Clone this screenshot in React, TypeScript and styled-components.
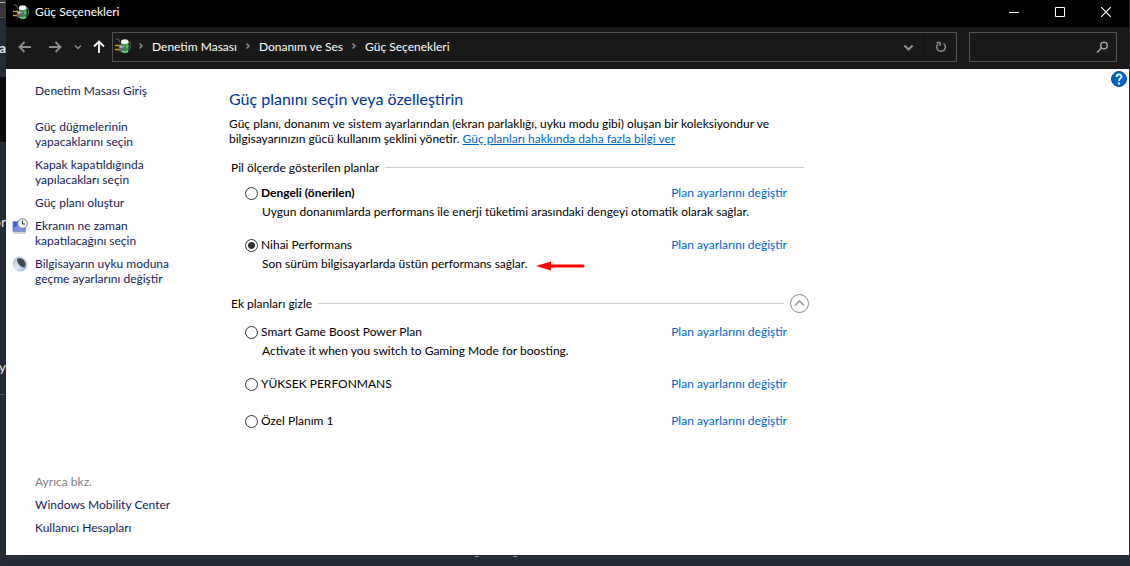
import React, { useState } from "react";
import styled, { createGlobalStyle } from "styled-components";

const GlobalStyle = createGlobalStyle`
  * { box-sizing: border-box; }
  body {
    margin: 0;
    background: #252a37;
    color: #000;
    font: 12px/15px Lato, "Open Sans", sans-serif;
  }
  a { text-decoration: none; }
  button { padding: 0; border: 0; background: none; color: inherit; font: inherit; }
  svg { display: block; flex: none; }
`;

const Desktop = styled.div`
  display: grid;
  grid-template-columns: 6px minmax(0, 1fr) 1px;
  grid-template-rows: minmax(0, 1fr) 11px;
  min-height: 100vh;
`;

const Backdrop = styled.div`
  position: relative;
  overflow: hidden;
  grid-row: 1 / 3;
  background: linear-gradient(#383838 0 17px, #252a37 17px 77px, #0b0b0b 77px 142px, #252a37 142px);
  color: #e4e4e4;
`;

const Fragment = styled.span<{ $top: number; $bold?: boolean }>`
  position: absolute;
  top: ${(p) => p.$top}px;
  right: 0;
  font-size: 14px;
  font-weight: ${(p) => (p.$bold ? 700 : 400)};
`;

const BackdropRule = styled.i<{ $top: number; $color: string }>`
  position: absolute;
  top: ${(p) => p.$top}px;
  left: 0;
  width: 5px;
  height: 1px;
  background: ${(p) => p.$color};
`;

const Edge = styled.div`
  background: #2e2e33;
`;

const Taskbar = styled.div`
  grid-column: 2 / 4;
  display: flex;
  gap: 34px;
  padding: 1px 0 0 469px;
  background: linear-gradient(#252d38, #232836);
`;

const Speck = styled.i`
  width: 4px;
  height: 1px;
  background: #8d908f;
`;

const Window = styled.div`
  display: flex;
  flex-direction: column;
  background: #fff;
`;

const TitleBar = styled.header`
  display: flex;
  align-items: center;
  height: 27px;
  padding: 0 0 4px 7px;
  background: #000;
  color: #fff;
`;

const WindowTitle = styled.span`
  flex: 1;
  padding-left: 6px;
`;

const CaptionButton = styled.button`
  display: grid;
  place-items: center;
  width: 46px;
  height: 23px;
`;

const Toolbar = styled.nav`
  display: flex;
  align-items: center;
  height: 42px;
  padding: 1px 12px 3px 4px;
  background: #191919;
  color: #fff;
`;

const NavButtons = styled.div`
  display: grid;
  grid-template-columns: 30px 30px 16px 26px;
  place-items: center;
`;

const AddressBar = styled.div`
  display: flex;
  flex: 1;
  align-items: center;
  height: 30px;
  padding: 0 0 2px 2px;
  border: 1px solid #535353;
`;

const Crumbs = styled.div`
  display: flex;
  flex: 1;
  align-items: center;
  gap: 7px;
  padding-left: 6px;
`;

const Crumb = styled.a`
  color: #fff;
`;

const BarButton = styled.button<{ $divided?: boolean }>`
  display: grid;
  place-items: center;
  align-self: stretch;
  width: 32px;
  padding-top: 2px;
  border-left: ${(p) => (p.$divided ? "1px solid #121212" : "0")};
`;

const SearchBox = styled.label`
  display: flex;
  align-items: center;
  width: 148px;
  height: 30px;
  margin-left: 12px;
  padding-right: 7px;
  border: 1px solid #535353;
`;

const SearchInput = styled.input`
  flex: 1;
  min-width: 0;
  border: 0;
  outline: 0;
  background: none;
  color: #fff;
  font: inherit;
`;

const Body = styled.div`
  display: flex;
  flex: 1;
`;

const Sidebar = styled.aside`
  display: flex;
  flex-direction: column;
  justify-content: space-between;
  flex: 0 0 223px;
  padding: 14px 48px 20px 6px;
`;

const TaskList = styled.ul`
  display: flex;
  flex-direction: column;
  gap: 8px;
  margin: 0;
  padding: 0;
  list-style: none;
`;

const Task = styled.li<{ $home?: boolean; $muted?: boolean }>`
  display: grid;
  grid-template-columns: 16px 1fr;
  gap: 7px;
  margin-bottom: ${(p) => (p.$home ? 13 : 0)}px;
  color: ${(p) => (p.$muted ? "#808080" : "#151c55")};
  white-space: pre-line;
`;

const TaskLink = styled.a`
  color: inherit;
`;

const Main = styled.main`
  flex: 0 1 586px;
  padding-top: 19px;
`;

const Heading = styled.h1`
  margin: 0 0 7px;
  color: #003399;
  font-size: 16px;
  line-height: 21px;
  font-weight: 400;
`;

const Intro = styled.p`
  max-width: 570px;
  margin: 0;
`;

const InfoLink = styled.a`
  color: #0066cc;
  text-decoration: underline;
`;

const Section = styled.section<{ $extra?: boolean }>`
  padding: ${(p) => (p.$extra ? 4 : 11)}px 0 0 2px;
`;

const SectionHead = styled.div<{ $inset: number }>`
  display: flex;
  align-items: center;
  gap: 6px;
  height: 21px;
  padding-right: ${(p) => p.$inset}px;
`;

const SectionTitle = styled.h2`
  margin: 0;
  font-size: inherit;
  font-weight: 400;
`;

const Rule = styled.i`
  flex: 1;
  height: 1px;
  background: #cccccc;
`;

const PlanList = styled.div<{ $extra?: boolean }>`
  padding: ${(p) => (p.$extra ? 10 : 7)}px 28px 0 14px;
`;

const Plan = styled.div`
  padding-bottom: 18px;
`;

const PlanRow = styled.div`
  display: flex;
  justify-content: space-between;
  height: 19px;
`;

const PlanLabel = styled.label<{ $bold?: boolean }>`
  display: flex;
  gap: 3px;
  font-weight: ${(p) => (p.$bold ? 700 : 400)};
`;

const Radio = styled.input`
  appearance: none;
  width: 13px;
  height: 13px;
  margin: 2px 0 0;
  border: 1px solid #333;
  border-radius: 50%;
  background: #fff;
  &:checked {
    background: radial-gradient(circle, #333 0 3px, #fff 4px);
  }
`;

const PlanLink = styled.a`
  color: #0066cc;
`;

const PlanNote = styled.div`
  display: flex;
  align-items: center;
  gap: 8px;
  padding-left: 17px;
`;

const HelpArea = styled.div`
  flex: 1;
  display: flex;
  justify-content: flex-end;
  align-items: flex-start;
  padding: 2px 2px 0 0;
`;

const PowerIcon = () => (
  <svg width="16" height="16" viewBox="0 0 16 16">
    <path d="M1 1.500c2-1.500 3 .5 4 3M14 3.500c2 2 2 6 0 8" stroke="#4c4c4c" fill="none" strokeWidth="1.500" />
    <path d="M6 4h7.500v9.500c-1 2-6 2-7.500 0z" fill="#2c9a45" />
    <path d="M6 3.500C6 .5 13.500.5 13.500 3.500V5c-1 1.500-6.500 1.500-7.500 0z" fill="#eef6ee" />
    <path d="M7 7c2 1 4 1 6.500 0v2c-2 1.500-4 1-6.500 0z" fill="#52cf65" />
    <path d="M6.500 13c2 1.500 4.500 1.500 6.500 0" stroke="#a8e6b0" fill="none" />
    <path d="M4 6.500h2.500L11 8v3l-4.500 2.500H4z" fill="#65696b" />
    <path d="M4.500 7.500h2L10 9l-5.500 1z" fill="#b5b8ba" />
    <path d="M0 7.500h4M0 11.500h4" stroke="#d09f1c" strokeWidth="1.300" />
  </svg>
);

const Arrow = ({ turn = 0, color = "#8c8c8c" }: { turn?: number; color?: string }) => (
  <svg width="14" height="14" viewBox="0 0 14 14">
    <path d="M13 7H2M6.500 2 1.500 7l5 5" transform={`rotate(${turn} 7 7)`} stroke={color} strokeWidth="1.800" fill="none" />
  </svg>
);

const Chevron = ({ down, size = 8 }: { down?: boolean; size?: number }) => (
  <svg width={size} height={size} viewBox="0 0 8 8">
    <path d={down ? "M1 2.500 4 5.500 7 2.500" : "M2.500 1.500 5 4 2.500 6.500"} stroke="#8c8c8c" strokeWidth="1.500" fill="none" />
  </svg>
);

const ScreenIcon = () => (
  <svg width="16" height="16" viewBox="0 0 16 16">
    <path d="M1 3.500h12.500v10H1z" fill="#3f5cda" stroke="#8f96b0" />
    <path d="M2 10l5-4 6 5v2H2z" fill="#7890f4" />
    <path d="M1 15h13" stroke="#a4a8b2" />
    <circle cx="10.500" cy="5.500" r="4.800" fill="#f0f3f5" stroke="#7d8388" />
    <path d="M10.500 2.500v3.500H13" stroke="#30363c" fill="none" />
  </svg>
);

const MoonIcon = () => (
  <svg width="16" height="16" viewBox="0 0 16 16">
    <defs>
      <linearGradient id="moon" x1="0" y1="0" x2="1" y2="1">
        <stop offset="0" stopColor="#a9b7c6" />
        <stop offset="0.500" stopColor="#dfe8f4" />
        <stop offset="1" stopColor="#8fadd8" />
      </linearGradient>
    </defs>
    <circle cx="8" cy="8" r="7.500" fill="url(#moon)" />
    <path d="M5 3c3-2 7.500 0 8.500 4 0 2 0 3.500-1 4.500C8.500 11 5 8 5 3z" fill="#41474f" />
  </svg>
);

const RedArrow = () => (
  <svg width="49" height="15" viewBox="0 0 49 15">
    <path d="M12 10h35" stroke="#f00" strokeWidth="3" strokeLinecap="round" />
    <path d="M0 10 15 5.500v9z" fill="#f00" />
  </svg>
);

type PlanData = { name: string; note?: string; bold?: boolean; pointed?: boolean };

const shownPlans: PlanData[] = [
  {
    name: "Dengeli (önerilen)",
    note: "Uygun donanımlarda performans ile enerji tüketimi arasındaki dengeyi otomatik olarak sağlar.",
    bold: true,
  },
  { name: "Nihai Performans", note: "Son sürüm bilgisayarlarda üstün performans sağlar.", pointed: true },
];

const extraPlans: PlanData[] = [
  { name: "Smart Game Boost Power Plan", note: "Activate it when you switch to Gaming Mode for boosting." },
  { name: "YÜKSEK PERFONMANS" },
  { name: "Özel Planım 1" },
];

const tasks = [
  { text: "Güç düğmelerinin\nyapacaklarını seçin" },
  { text: "Kapak kapatıldığında\nyapılacakları seçin" },
  { text: "Güç planı oluştur" },
  { text: "Ekranın ne zaman\nkapatılacağını seçin", icon: <ScreenIcon /> },
  { text: "Bilgisayarın uyku moduna\ngeçme ayarlarını değiştir", icon: <MoonIcon /> },
];

export default function App() {
  const [active, setActive] = useState("Nihai Performans");

  const renderPlans = (plans: PlanData[], extra = false) => (
    <PlanList $extra={extra}>
      {plans.map((plan) => (
        <Plan key={plan.name}>
          <PlanRow>
            <PlanLabel $bold={plan.bold}>
              <Radio type="radio" name="plan" checked={active === plan.name} onChange={() => setActive(plan.name)} />
              {plan.name}
            </PlanLabel>
            <PlanLink href="#">Plan ayarlarını değiştir</PlanLink>
          </PlanRow>
          {plan.note && (
            <PlanNote>
              {plan.note}
              {plan.pointed && <RedArrow />}
            </PlanNote>
          )}
        </Plan>
      ))}
    </PlanList>
  );

  return (
    <>
      <GlobalStyle />
      <Desktop>
        <Backdrop aria-hidden="true">
          <Fragment $top={40} $bold>a</Fragment>
          <Fragment $top={214}>or</Fragment>
          <Fragment $top={359}>y</Fragment>
          <BackdropRule $top={2} $color="#c9b5ae" />
          <BackdropRule $top={17} $color="#555555" />
          <BackdropRule $top={394} $color="#465068" />
        </Backdrop>
        <Window>
          <TitleBar>
            <PowerIcon />
            <WindowTitle>Güç Seçenekleri</WindowTitle>
            <CaptionButton aria-label="Simge durumuna küçült">
              <svg width="10" height="10" viewBox="0 0 10 10"><path d="M0 5.500h10" stroke="#fff" /></svg>
            </CaptionButton>
            <CaptionButton aria-label="Ekranı kapla">
              <svg width="10" height="10" viewBox="0 0 10 10"><path d="M.5.5h9v9h-9z" stroke="#fff" fill="none" /></svg>
            </CaptionButton>
            <CaptionButton aria-label="Kapat">
              <svg width="10" height="10" viewBox="0 0 10 10"><path d="m0 0 10 10M10 0 0 10" stroke="#fff" strokeWidth="1.200" /></svg>
            </CaptionButton>
          </TitleBar>
          <Toolbar>
            <NavButtons>
              <button aria-label="Geri"><Arrow /></button>
              <button aria-label="İleri"><Arrow turn={180} /></button>
              <button aria-label="Son konumlar"><Chevron down /></button>
              <button aria-label="Yukarı"><Arrow turn={90} color="#fff" /></button>
            </NavButtons>
            <AddressBar>
              <PowerIcon />
              <Crumbs>
                <Chevron />
                <Crumb href="#">Denetim Masası</Crumb>
                <Chevron />
                <Crumb href="#">Donanım ve Ses</Crumb>
                <Chevron />
                <Crumb href="#">Güç Seçenekleri</Crumb>
              </Crumbs>
              <BarButton aria-label="Önceki konumlar"><Chevron down size={11} /></BarButton>
              <BarButton aria-label="Yenile" $divided>
                <svg width="12" height="12" viewBox="0 0 12 12">
                  <path d="M8.500 2.500A4.300 4.300 0 1 1 3 3M1.500 1.500H5V5" stroke="#8c8c8c" strokeWidth="1.500" fill="none" />
                </svg>
              </BarButton>
            </AddressBar>
            <SearchBox>
              <SearchInput type="search" aria-label="Ara" />
              <svg width="13" height="13" viewBox="0 0 13 13">
                <circle cx="8" cy="4.500" r="3.300" stroke="#a0a0a0" strokeWidth="1.500" fill="none" />
                <path d="M5.500 7 1 11.500" stroke="#a0a0a0" strokeWidth="1.700" />
              </svg>
            </SearchBox>
          </Toolbar>
          <Body>
            <Sidebar>
              <TaskList>
                <Task $home><span /><TaskLink href="#">Denetim Masası Giriş</TaskLink></Task>
                {tasks.map((task) => (
                  <Task key={task.text}>
                    {task.icon ?? <span />}
                    <TaskLink href="#">{task.text}</TaskLink>
                  </Task>
                ))}
              </TaskList>
              <TaskList>
                <Task $muted><span />Ayrıca bkz.</Task>
                <Task><span /><TaskLink href="#">Windows Mobility Center</TaskLink></Task>
                <Task><span /><TaskLink href="#">Kullanıcı Hesapları</TaskLink></Task>
              </TaskList>
            </Sidebar>
            <Main>
              <Heading>Güç planını seçin veya özelleştirin</Heading>
              <Intro>
                Güç planı, donanım ve sistem ayarlarından (ekran parlaklığı, uyku modu gibi) oluşan bir koleksiyondur ve
                bilgisayarınızın gücü kullanım şeklini yönetir. <InfoLink href="#">Güç planları hakkında daha fazla bilgi ver</InfoLink>
              </Intro>
              <Section>
                <SectionHead $inset={11}>
                  <SectionTitle>Pil ölçerde gösterilen planlar</SectionTitle>
                  <Rule />
                </SectionHead>
                {renderPlans(shownPlans)}
              </Section>
              <Section $extra>
                <SectionHead $inset={6}>
                  <SectionTitle>Ek planları gizle</SectionTitle>
                  <Rule />
                  <button aria-label="Ek planları gizle">
                    <svg width="19" height="19" viewBox="0 0 19 19">
                      <circle cx="9.500" cy="9.500" r="9" stroke="#8a8a8a" fill="#fff" />
                      <path d="M5 11.500 9.500 7l4.500 4.500" stroke="#999" strokeWidth="1.700" fill="none" />
                    </svg>
                  </button>
                </SectionHead>
                {renderPlans(extraPlans, true)}
              </Section>
            </Main>
            <HelpArea>
              <button aria-label="Yardım">
                <svg width="16" height="16" viewBox="0 0 16 16">
                  <circle cx="8" cy="8" r="7.500" fill="#0067c5" stroke="#0b4d8c" />
                  <path d="M5.500 6c0-3.500 5-3.300 5-.5C10.500 7.500 8 7.500 8 10" stroke="#fff" strokeWidth="1.700" fill="none" />
                  <path d="M7 11.500h2v2H7z" fill="#fff" />
                </svg>
              </button>
            </HelpArea>
          </Body>
        </Window>
        <Edge />
        <Taskbar aria-hidden="true"><Speck /><Speck /></Taskbar>
      </Desktop>
    </>
  );
}
